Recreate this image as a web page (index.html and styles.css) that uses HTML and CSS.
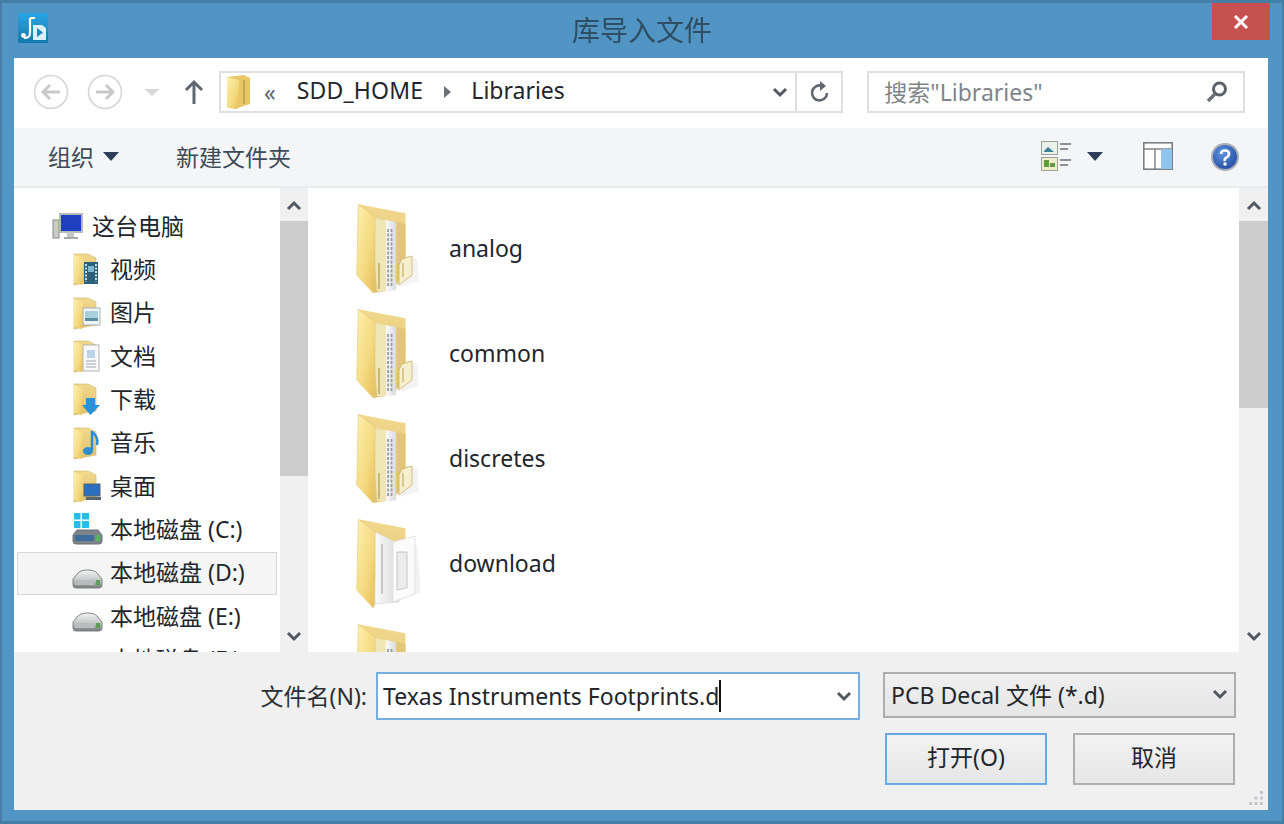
FILE: index.html
```html
<!DOCTYPE html>
<html lang="zh-CN">
<head>
<meta charset="utf-8">
<title>库导入文件</title>
<link rel="stylesheet" href="styles.css">
</head>
<body>
<svg class="defs" aria-hidden="true">
  <defs>
    <linearGradient id="fy" x1="0" y1="0" x2="1" y2="1"><stop offset="0" stop-color="#fdf0ac"/><stop offset=".6" stop-color="#f4d97f"/><stop offset="1" stop-color="#e5bd55"/></linearGradient>
    <linearGradient id="fb" x1="0" y1="0" x2="0" y2="1"><stop offset="0" stop-color="#f1d88c"/><stop offset="1" stop-color="#dfc071"/></linearGradient>
    <linearGradient id="pp" x1="0" y1="0" x2="1" y2="0"><stop offset="0" stop-color="#fbfbfb"/><stop offset="1" stop-color="#d9dadc"/></linearGradient>
    <linearGradient id="ic" x1="0" y1="0" x2="0" y2="1"><stop offset="0" stop-color="#2ba6e4"/><stop offset="1" stop-color="#1479ad"/></linearGradient>
    <radialGradient id="hp" cx=".4" cy=".35" r=".8"><stop offset="0" stop-color="#5f93e0"/><stop offset="1" stop-color="#163f98"/></radialGradient>
    <linearGradient id="dk" x1="0" y1="0" x2="0" y2="1"><stop offset="0" stop-color="#f2f3f3"/><stop offset=".55" stop-color="#c6c9c9"/><stop offset="1" stop-color="#76797a"/></linearGradient>
    <symbol id="big-flap" viewBox="0 0 65 94">
      <path d="M3.3 1.3 20 13.7V58.700L18.300 90 1.700 72Z" fill="url(#fy)" stroke="#e6c876" stroke-width=".6"/>
    </symbol>
    <symbol id="big-folder" viewBox="0 0 65 94">
      <path d="M46 84 64 78 62 56 52 52Z" fill="#e9e9e9" opacity=".55"/>
      <path d="M3.500 1.300 50.500 10.300V74L30 88 18 90Z" fill="url(#fb)"/>
      <path d="M20 15 30 17V89L22 88 20 58Z" fill="#eee6b4"/>
      <path d="M24 60V86" stroke="#c9b772" stroke-width="2"/>
      <path d="M30.500 17 41 19V87L30.500 89Z" fill="url(#pp)"/>
      <path d="M33 26V84M36.500 26V84" stroke="#989da3" stroke-width="1.800" stroke-dasharray="3 1.500"/>
      <path d="M41.500 19 50.500 21V68L41.500 83Z" fill="#e2c577"/>
      <path d="M44 62 47 56 57 53V72L44 82Z" fill="#f6efcd" stroke="#c9b06c" stroke-width=".8"/>
      <path d="M48 60V74" stroke="#d9c88e" stroke-width="2"/>
      <use href="#big-flap"/>
    </symbol>
    <symbol id="dl-folder" viewBox="0 0 65 94">
      <path d="M3.500 1.300 50.500 10.300V40L18 90Z" fill="url(#fb)"/>
      <path d="M40 84 66 74 62 28 58 26Z" fill="#e8e8e8" opacity=".6"/>
      <path d="M20 14 44 26V84L20 86Z" fill="url(#pp)" stroke="#dedede" stroke-width=".8"/>
      <path d="M27 26V76" stroke="#c6c6c6" stroke-width="2"/>
      <path d="M38 24 60 18V76L38 84Z" fill="#fbfbfb" stroke="#dedede" stroke-width=".8"/>
      <path d="M42 34V72L52 70V34Z" fill="#ececec" stroke="#bbb" stroke-width=".8"/>
      <use href="#big-flap"/>
    </symbol>
    <symbol id="small-folder" viewBox="0 0 31 33">
      <path d="M2 1H16L24 5V28L2 32Z" fill="url(#fb)" stroke="#d5b666" stroke-width=".6"/>
      <path d="M2 2 11 5V26L10 32 2 30Z" fill="url(#fy)"/>
    </symbol>
    <symbol id="drive" viewBox="0 0 31 33">
      <path d="M6 16C9 12 22 12 25 16L30 22V28Q30 31 27 31H4Q1 31 1 28V22Z" fill="url(#dk)" stroke="#7e8283"/>
      <rect x="24" y="23" width="4" height="5" fill="#5d9d5a"/>
      <rect x="3" y="23" width="19" height="5" fill="#b9bcbc"/>
    </symbol>
    <symbol id="chev" viewBox="0 0 16 12">
      <path d="M2 3 8 9 14 3" fill="none" stroke="#505862" stroke-width="3"/>
    </symbol>
    <symbol id="chev-up" viewBox="0 0 16 12">
      <path d="M2 9 8 3 14 9" fill="none" stroke="#505862" stroke-width="3"/>
    </symbol>
  </defs>
</svg>

<div class="window">
  <header class="titlebar">
    <svg class="app-icon" viewBox="0 0 30 30"><rect width="30" height="30" fill="url(#ic)"/><path d="M12 5V20Q12 25 6 25" fill="none" stroke="#fff" stroke-width="2.200"/><circle cx="5.500" cy="22.500" r="2.400" fill="#fff"/><path d="M12 5H17" stroke="#fff" stroke-width="2"/><path d="M15 12H24L28 15V27H15Z" fill="#d9f1fb"/><path d="M19 15V24L25 19.500Z" fill="#1b86bf"/></svg>
    <h1 class="title">库导入文件</h1>
    <button class="close" type="button" aria-label="关闭"><svg viewBox="0 0 16 16"><path d="M2 2 14 14M14 2 2 14" stroke="#fff" stroke-width="3"/></svg></button>
  </header>

  <div class="client">
    <nav class="navbar">
      <svg class="circ" viewBox="0 0 36 36"><circle cx="18" cy="18" r="16.500" fill="#fff" stroke="#d6d6d6" stroke-width="1.600"/><path d="M27 18H11M17 11 10 18 17 25" fill="none" stroke="#c9c9c9" stroke-width="3"/></svg>
      <svg class="circ" viewBox="0 0 36 36"><circle cx="18" cy="18" r="16.500" fill="#fff" stroke="#d6d6d6" stroke-width="1.600"/><path d="M9 18H25M19 11 26 18 19 25" fill="none" stroke="#c9c9c9" stroke-width="3"/></svg>
      <span class="tri tri-off"></span>
      <svg class="up" viewBox="0 0 20 26"><path d="M10 25V4M2 11 10 3 18 11" fill="none" stroke="#5f6770" stroke-width="3"/></svg>
      <div class="address">
        <svg class="addr-folder" viewBox="0 0 25 37"><path d="M1 3 18 1 24 4V30L9 35 1 33Z" fill="#e9c767"/><path d="M1 3 13 6V28L11 35 1 32Z" fill="url(#fy)"/><path d="M18 6V30" stroke="#c7a64e" stroke-width="2"/></svg>
        <span class="crumb-sep">«</span>
        <span class="crumb crumb-home">SDD_HOME</span>
        <span class="tri-right"></span>
        <span class="crumb">Libraries</span>
        <span class="spring"></span>
        <svg class="addr-chev" viewBox="0 0 16 12"><use href="#chev"/></svg>
        <span class="addr-div"></span>
        <svg class="refresh" viewBox="0 0 22 24"><path d="M18 13A7.500 7.500 0 1 1 13 5.800" fill="none" stroke="#5f6770" stroke-width="2.600"/><path d="M11 1 17 6 11 11Z" fill="#5f6770"/></svg>
      </div>
      <div class="search">
        <span class="search-text">搜索"Libraries"</span>
        <svg class="magnifier" viewBox="0 0 24 24"><circle cx="14.500" cy="9" r="6" fill="none" stroke="#5b6269" stroke-width="3"/><path d="M10 14 3 21" stroke="#6a7178" stroke-width="3.500"/></svg>
      </div>
    </nav>

    <div class="toolbar">
      <span class="tool">组织</span><span class="tri tri-dark tri-org"></span>
      <span class="tool tool-new">新建文件夹</span>
      <span class="spring"></span>
      <svg class="view-icon" viewBox="0 0 30 30">
        <rect x=".5" y=".5" width="16" height="13" fill="#e8f2e8" stroke="#9aa39a"/><path d="M3 10 7 6 13 11H3Z" fill="#3e7f9c"/>
        <rect x=".5" y="16.500" width="16" height="13" fill="#f3ecc9" stroke="#9aa39a"/><path d="M3 19H8V26H3ZM9 22H14V26H9Z" fill="#5d9b3c"/>
        <path d="M19 3H30M19 8H27M19 19H30M19 24H27" stroke="#6c7278" stroke-width="1.600"/>
      </svg>
      <span class="tri tri-dark tri-view"></span>
      <svg class="pane-icon" viewBox="0 0 30 28"><rect x=".8" y=".8" width="28.400" height="26.400" fill="#fff" stroke="#7c8085" stroke-width="1.600"/><path d="M1 7H29M12 7V27" stroke="#7c8085" stroke-width="1.400"/><rect x="18" y="7" width="11" height="20" fill="#8fc4ee"/></svg>
      <svg class="help-icon" viewBox="0 0 28 28"><circle cx="14" cy="14" r="13" fill="url(#hp)" stroke="#a8adb5" stroke-width="2"/><path d="M10 11Q10 7.500 14 7.500T18 11Q18 13 15.500 14.500T14 18" fill="none" stroke="#fff" stroke-width="2.600"/><circle cx="14" cy="21" r="1.700" fill="#fff"/></svg>
    </div>

    <main class="main">
      <aside class="tree">
        <div class="tree-row tree-root">
          <svg class="ti" viewBox="0 0 31 33"><rect x="1" y="10" width="6" height="18" fill="#c9cdc9" stroke="#888"/><rect x="8" y="4" width="22" height="18" fill="#1d3fc0" stroke="#b4b9be" stroke-width="2"/><path d="M15 22V27H22V22Z" fill="#c3c6c9"/><path d="M12 28H26" stroke="#aaa" stroke-width="2"/></svg>
          <span>这台电脑</span>
        </div>
        <div class="tree-row">
          <svg class="ti" viewBox="0 0 31 33"><use href="#small-folder"/><rect x="12" y="9" width="14" height="22" fill="#2c5f7a"/><path d="M14 11V29M24 11V29" stroke="#dfe5e8" stroke-width="1.800" stroke-dasharray="2 1.500"/><rect x="16" y="13" width="6" height="6" fill="#7fb7d0"/></svg>
          <span>视频</span>
        </div>
        <div class="tree-row">
          <svg class="ti" viewBox="0 0 31 33"><use href="#small-folder"/><rect x="11" y="11" width="17" height="17" fill="#f0f4f5" stroke="#a9b1b4"/><rect x="13" y="14" width="13" height="10" fill="#a9cfdd"/><path d="M13 21H26V24H13Z" fill="#5a8e9d"/></svg>
          <span>图片</span>
        </div>
        <div class="tree-row">
          <svg class="ti" viewBox="0 0 31 33"><use href="#small-folder"/><rect x="11" y="5" width="16" height="26" fill="#f8f8f8" stroke="#b2b5b8"/><path d="M14 21H24M14 24H24M14 27H24" stroke="#a3a7aa"/><rect x="15" y="10" width="8" height="8" fill="#bcd3ea"/></svg>
          <span>文档</span>
        </div>
        <div class="tree-row">
          <svg class="ti" viewBox="0 0 31 33"><use href="#small-folder"/><path d="M14 15H23V22H28L18.500 32 10 22H14Z" fill="#2b8fd9"/></svg>
          <span>下载</span>
        </div>
        <div class="tree-row">
          <svg class="ti" viewBox="0 0 31 33"><use href="#small-folder"/><path d="M20 4V23" stroke="#2d8dd3" stroke-width="2.500"/><path d="M20 5Q27 10 25 18" fill="none" stroke="#2d8dd3" stroke-width="2.500"/><ellipse cx="16" cy="24" rx="5" ry="4" fill="#2d8dd3"/></svg>
          <span>音乐</span>
        </div>
        <div class="tree-row">
          <svg class="ti" viewBox="0 0 31 33"><use href="#small-folder"/><rect x="12" y="14" width="16" height="12" fill="#2a6fc0" stroke="#59636b"/><rect x="14" y="27" width="15" height="3" fill="#59636b"/></svg>
          <span>桌面</span>
        </div>
        <div class="tree-row">
          <svg class="ti" viewBox="0 0 31 33"><path d="M2 0H8.500V6.500H2ZM10 0H17V6.500H10ZM2 8H8.500V15H2ZM10 8H17V15H10Z" fill="#21c0ea"/><path d="M5 17H26L30 22V28Q30 31 27 31H4Q1 31 1 28V22Z" fill="#7d8589" stroke="#6b7276"/><rect x="3" y="22" width="19" height="6" fill="#3c6d9b"/><rect x="24" y="22" width="4" height="6" fill="#57b35a"/></svg>
          <span>本地磁盘 (C:)</span>
        </div>
        <div class="tree-row tree-hot">
          <svg class="ti" viewBox="0 0 31 33"><use href="#drive"/></svg>
          <span>本地磁盘 (D:)</span>
        </div>
        <div class="tree-row">
          <svg class="ti" viewBox="0 0 31 33"><use href="#drive"/></svg>
          <span>本地磁盘 (E:)</span>
        </div>
        <div class="tree-row">
          <svg class="ti" viewBox="0 0 31 33"><use href="#drive"/></svg>
          <span>本地磁盘 (F:)</span>
        </div>
      </aside>
      <div class="scrollbar">
        <svg class="sb-chev" viewBox="0 0 16 12"><use href="#chev-up"/></svg>
        <div class="sb-track"><div class="thumb thumb-tree"></div></div>
        <svg class="sb-chev" viewBox="0 0 16 12"><use href="#chev"/></svg>
      </div>
      <section class="files">
        <div class="file"><svg class="fi" viewBox="0 0 65 94"><use href="#big-folder"/></svg><span>analog</span></div>
        <div class="file"><svg class="fi" viewBox="0 0 65 94"><use href="#big-folder"/></svg><span>common</span></div>
        <div class="file"><svg class="fi" viewBox="0 0 65 94"><use href="#big-folder"/></svg><span>discretes</span></div>
        <div class="file"><svg class="fi" viewBox="0 0 65 94"><use href="#dl-folder"/></svg><span>download</span></div>
        <div class="file"><svg class="fi" viewBox="0 0 65 94"><use href="#big-folder"/></svg><span></span></div>
      </section>
      <div class="scrollbar scrollbar-files">
        <svg class="sb-chev" viewBox="0 0 16 12"><use href="#chev-up"/></svg>
        <div class="sb-track"><div class="thumb thumb-files"></div></div>
        <svg class="sb-chev" viewBox="0 0 16 12"><use href="#chev"/></svg>
      </div>
    </main>

    <footer class="footer">
      <div class="name-row">
        <label class="name-label">文件名(N):</label>
        <div class="name-input"><span>Texas Instruments Footprints.d</span><i class="caret"></i><span class="spring"></span><svg class="field-chev" viewBox="0 0 16 12"><use href="#chev"/></svg></div>
        <div class="type-select"><span>PCB Decal 文件 (*.d)</span><span class="spring"></span><svg class="field-chev" viewBox="0 0 16 12"><use href="#chev"/></svg></div>
      </div>
      <div class="btn-row">
        <button class="btn btn-default" type="button">打开(O)</button>
        <button class="btn" type="button">取消</button>
      </div>
      <svg class="grip" viewBox="0 0 16 16"><path d="M12 1H15V4H12ZM12 6.500H15V9.500H12ZM6.500 6.500H9.500V9.500H6.500ZM12 12H15V15H12ZM6.500 12H9.500V15H6.500ZM1 12H4V15H1Z" fill="#c4c6c8"/></svg>
    </footer>
  </div>
</div>
</body>
</html>
```

FILE: styles.css
```css
* { box-sizing: border-box; }
html, body { margin: 0; padding: 0; }
body {
  width: 1284px;
  height: 824px;
  overflow: hidden;
  background: #5095c3;
  font-family: "Noto Sans", "Noto Sans CJK SC", sans-serif;
  font-size: 23px;
  color: #22262b;
}
.defs { position: absolute; width: 0; height: 0; }
.spring { flex: 1; }

.window {
  width: 1284px;
  height: 824px;
  display: flex;
  flex-direction: column;
  border: 3px solid #467ea6;
  border-width: 3px 2px 3px 2px;
  filter: blur(.5px);
}

.titlebar {
  height: 55px;
  flex: none;
  display: flex;
  align-items: flex-start;
  padding-left: 16px;
  position: relative;
}
.app-icon { width: 30px; height: 30px; margin-top: 10px; }
.title {
  position: absolute;
  left: 0;
  right: 0;
  top: 9px;
  margin: 0;
  text-align: center;
  font-size: 28px;
  line-height: 36px;
  font-weight: 400;
  color: #2f4d63;
}
.close {
  position: absolute;
  right: 12px;
  top: 0;
  width: 58px;
  height: 37px;
  padding: 0;
  border: 0;
  background: #c75050;
  display: flex;
  align-items: center;
  justify-content: center;
}
.close svg { width: 16px; height: 16px; }

.client {
  flex: 1;
  margin: 0 14px 11px 12px;
  display: flex;
  flex-direction: column;
  background: #fff;
  min-height: 0;
}

.navbar {
  height: 70px;
  flex: none;
  display: flex;
  align-items: center;
  padding: 0 23px 2px 19px;
  background: #fff;
}
.circ { width: 36px; height: 36px; margin-right: 18px; }
.circ + .circ { margin-right: 21px; }
.tri { display: inline-block; width: 0; height: 0; border-left: 8px solid transparent; border-right: 8px solid transparent; }
.tri-off { border-top: 7px solid #d8d8d8; margin-right: 24px; }
.tri-dark { border-top: 9px solid #2d3f58; }
.up { width: 20px; height: 26px; margin-right: 15px; }
.address, .search {
  height: 42px;
  display: flex;
  align-items: center;
  border: 2px solid #dedfe0;
  background: #fff;
}
.address { width: 625px; padding-left: 5px; margin-right: 24px; }
.addr-folder { width: 25px; height: 37px; margin-right: 13px; flex: none; }
.crumb-sep { color: #5f6770; margin-right: 21px; font-size: 23px; line-height: 1; }
.crumb { line-height: 38px; padding-bottom: 4px; }
.crumb-home { letter-spacing: .2px; }
.tri-right { width: 0; height: 0; border-top: 6px solid transparent; border-bottom: 6px solid transparent; border-left: 7px solid #6b7178; margin: 0 20px 0 21px; }
.addr-chev { width: 16px; height: 12px; margin-right: 7px; }
.addr-div { width: 2px; height: 38px; background: #dedfe0; }
.refresh { width: 22px; height: 24px; margin: 0 10px 0 12px; }
.search { width: 378px; padding: 0 14px 0 15px; justify-content: space-between; }
.search-text { color: #7f8488; line-height: 38px; }
.magnifier { width: 24px; height: 24px; }

.toolbar {
  height: 60px;
  flex: none;
  display: flex;
  align-items: center;
  padding: 0 29px 2px 34px;
  background: #f4f5f7;
  border-bottom: 2px solid #e9ecef;
}
.tool { color: #3d4a58; }
.tri-org { margin-left: 9px; }
.tool-new { margin-left: 57px; }
.view-icon { width: 30px; height: 30px; }
.tri-view { margin-left: 16px; margin-right: 40px; }
.pane-icon { width: 30px; height: 28px; margin-right: 38px; }
.help-icon { width: 28px; height: 28px; margin-top: 2px; }

.main {
  height: 464px;
  flex: none;
  display: flex;
  min-height: 0;
  background: #fff;
}
.tree {
  width: 266px;
  flex: none;
  overflow: hidden;
  padding: 17px 3px 0;
}
.tree-row {
  height: 43.33px;
  display: flex;
  align-items: center;
  gap: 7px;
  padding-left: 54px;
  border: 1px solid transparent;
  white-space: nowrap;
}
.tree-root { padding-left: 34px; gap: 9px; }
.tree-hot { background: #f5f5f5; border-color: #d9d9d9; }
.tree-row span { padding-bottom: 4px; }
.ti { width: 31px; height: 33px; flex: none; }

.scrollbar {
  width: 28px;
  flex: none;
  display: flex;
  flex-direction: column;
  align-items: center;
  background: #f0f0f0;
  padding: 12px 0 10px;
}
.scrollbar-files { width: 29px; }
.sb-chev { width: 16px; height: 12px; flex: none; }
.sb-track { flex: 1; align-self: stretch; margin: 9px 0 14px; }
.thumb { background: #cdcdcd; }
.thumb-tree { height: 255px; }
.thumb-files { height: 187px; }

.files {
  flex: 1;
  margin-left: 4px;
  padding-top: 8px;
  overflow: hidden;
  min-width: 0;
}
.file {
  height: 105px;
  display: flex;
  align-items: center;
  padding-left: 43px;
  gap: 29px;
}
.fi { width: 65px; height: 94px; flex: none; margin-top: 3px; }
.file span { padding-bottom: 2px; }

.footer {
  flex: 1;
  position: relative;
  background: #f0f0f0;
  padding-top: 20px;
}
.name-row { display: flex; align-items: flex-start; justify-content: flex-end; padding-right: 32px; }
.name-label { line-height: 48px; margin-right: 9px; color: #2b2f33; }
.name-input {
  width: 484px;
  height: 48px;
  margin-right: 23px;
  display: flex;
  align-items: center;
  background: #fff;
  border: 2px solid #77aee0;
  padding: 0 6px 0 5px;
}
.caret { width: 2px; height: 32px; background: #111; }
.field-chev { width: 16px; height: 12px; margin-right: 0; }
.type-select {
  width: 353px;
  height: 46px;
  display: flex;
  align-items: center;
  background: linear-gradient(#efefef, #e6e6e6);
  border: 2px solid #adadad;
  padding: 0 6px 3px 6px;
}
.btn-row { display: flex; justify-content: flex-end; gap: 26px; margin-top: 13px; padding-right: 33px; }
.btn {
  width: 162px;
  height: 52px;
  padding: 0 0 6px;
  font: inherit;
  color: inherit;
  background: linear-gradient(#f2f2f2, #e6e6e6);
  border: 2px solid #aeaeae;
}
.btn-default { border-color: #67aae6; }
.grip { position: absolute; right: 4px; bottom: 4px; width: 16px; height: 16px; }
```
